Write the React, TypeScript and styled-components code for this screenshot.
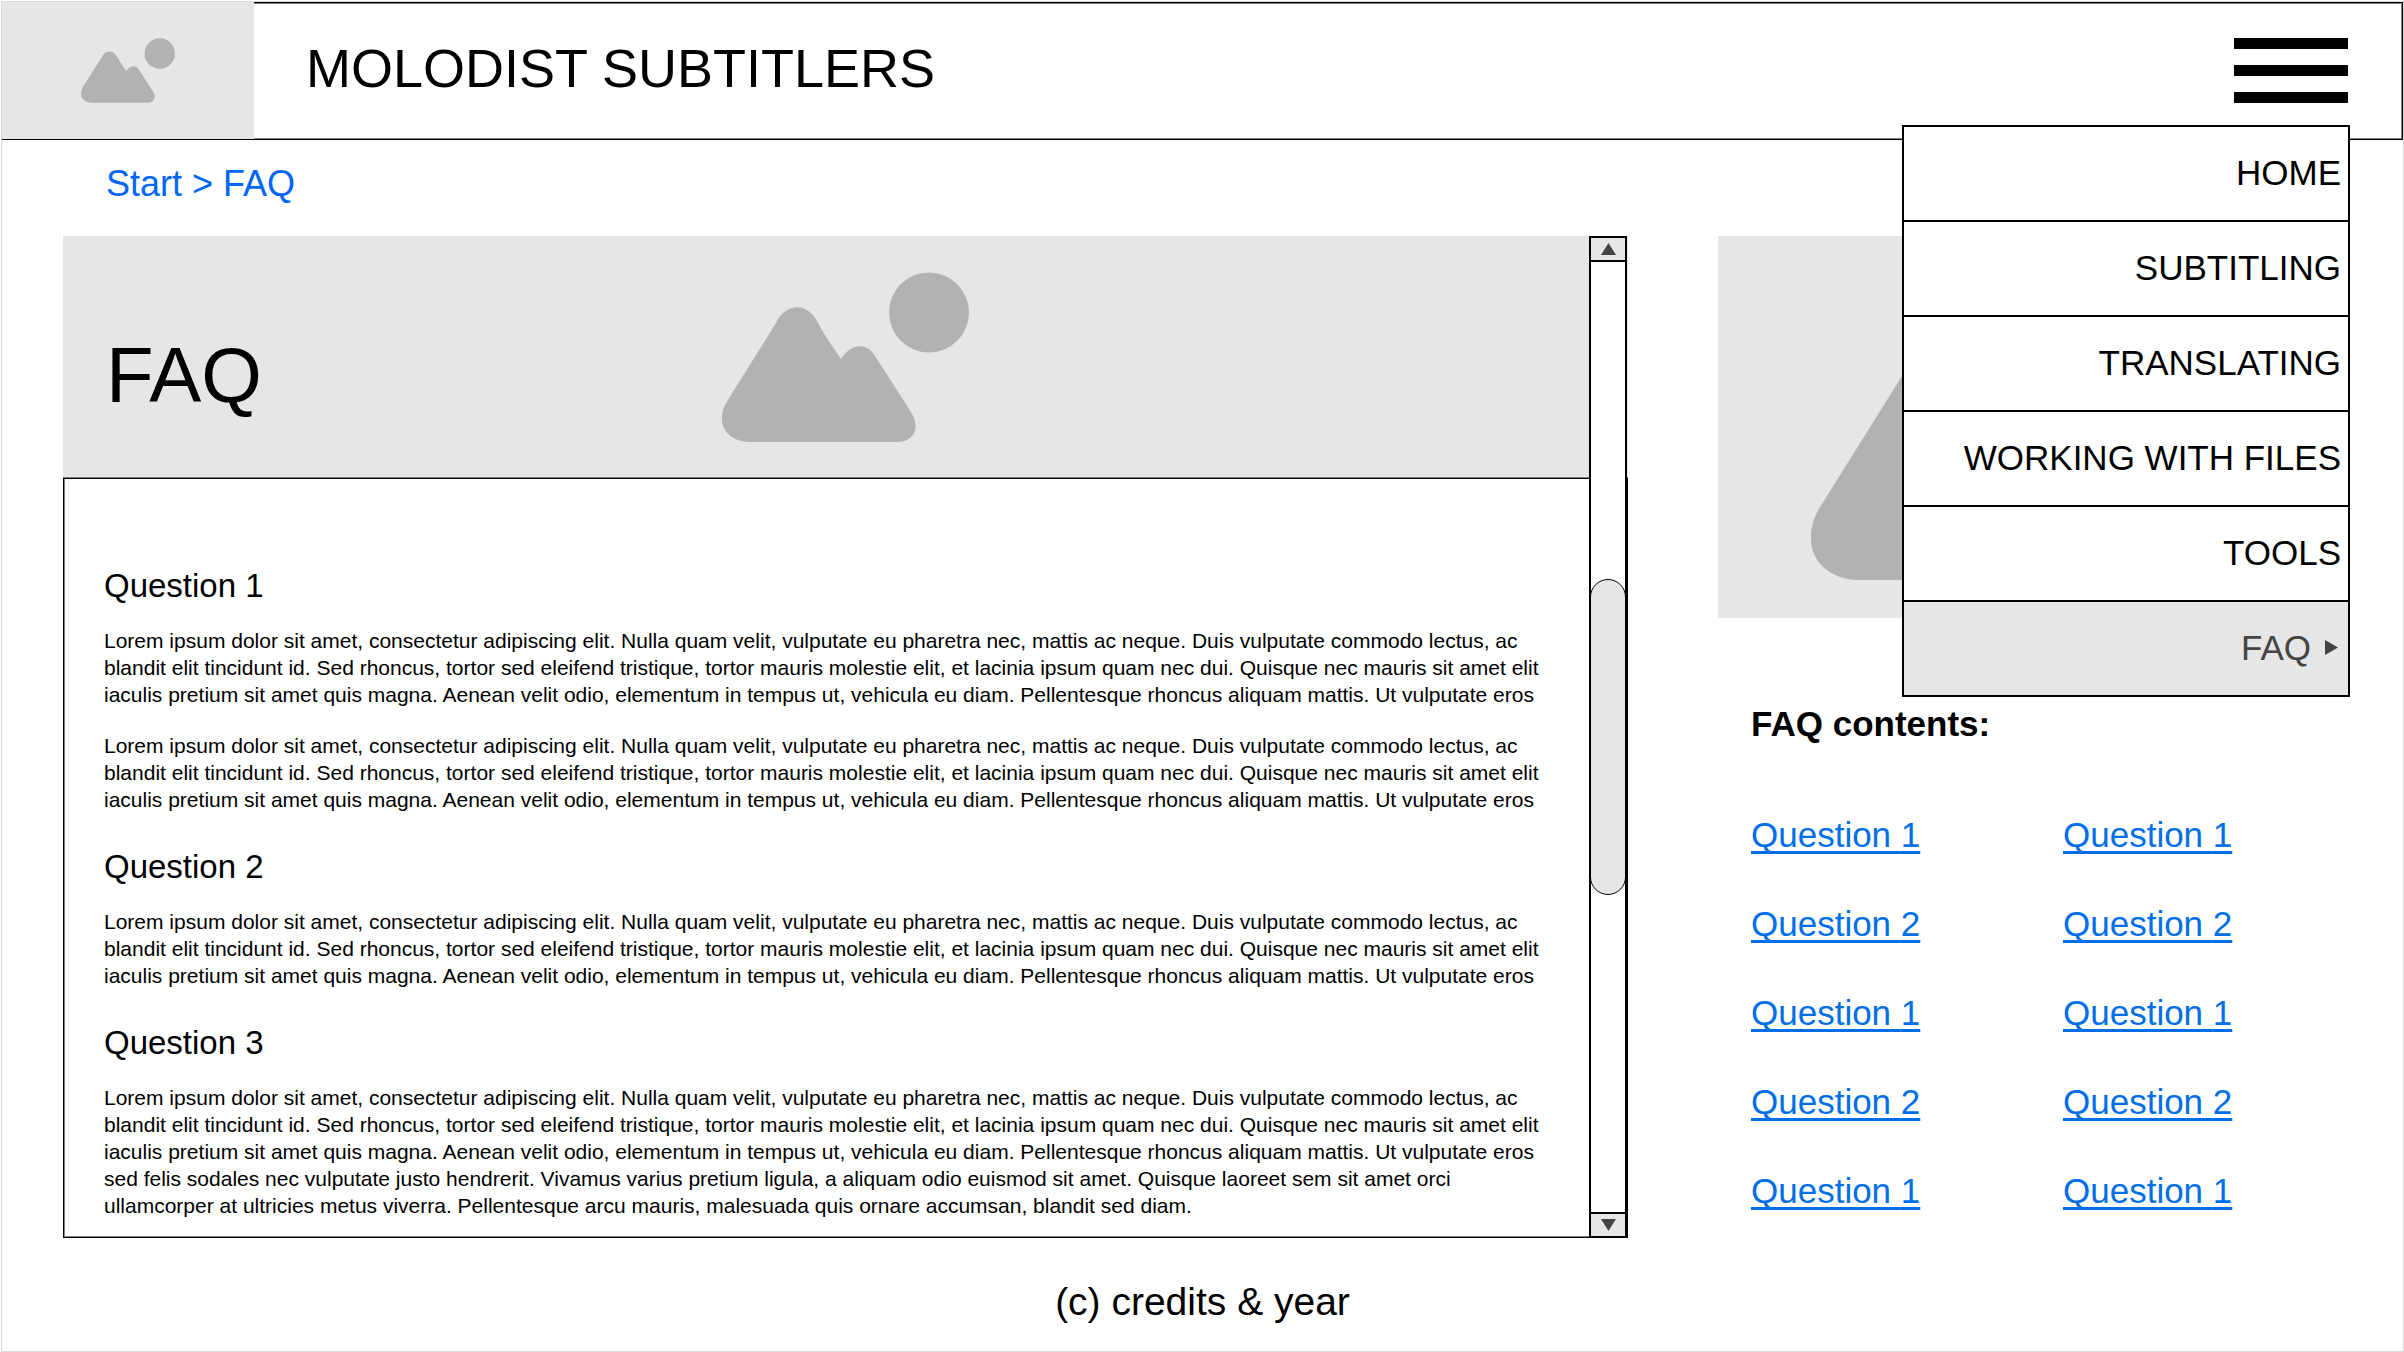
import React from 'react';
import styled, { createGlobalStyle } from 'styled-components';

const line = '#000000';
const soft = '#808080';
const fill = '#e6e6e6';
const shape = '#b2b2b2';
const dim = '#444444';

const GlobalStyle = createGlobalStyle`
  *, *::before, *::after { box-sizing: border-box; }
  body {
    margin: 0;
    padding: 1px 0 0 1px;
    background: #ffffff;
    color: #000000;
    font-family: "Liberation Sans", Arial, Helvetica, sans-serif;
  }
  h1, h2, h3, p, ul { margin: 0; padding: 0; font-weight: 400; }
  ul { list-style: none; }
  a { color: inherit; text-decoration: none; }
  button { margin: 0; padding: 0; border: 0; background: none; font: inherit; cursor: pointer; }
`;

const Page = styled.div`
  display: flex;
  flex-direction: column;
  min-height: calc(100vh - 1px);
  border: 1px solid #d9d9d9;
`;

const Header = styled.header`
  position: relative;
  display: flex;
  align-items: stretch;
  height: 138px;
  border: 1px solid ${line};
  border-left: 0;
  box-shadow: inset 0 1px 0 ${soft}, inset -1px -1px 0 ${soft};
`;

const Logo = styled.a`
  display: flex;
  align-items: center;
  justify-content: center;
  width: 252px;
  margin-top: -1px;
  background: ${fill};
`;

const SiteTitle = styled.h1`
  padding: 34px 0 0 52px;
  font-size: 54px;
  line-height: 62px;
`;

const MenuArea = styled.div`
  margin-left: auto;
  padding: 35px 54px 0 0;
`;

const MenuButton = styled.button`
  display: flex;
  flex-direction: column;
  gap: 16px;
  width: 114px;
`;

const Bar = styled.span`
  display: block;
  width: 100%;
  height: 11px;
  background: #000000;
`;

const Menu = styled.nav`
  position: absolute;
  z-index: 2;
  top: 122px;
  right: 52px;
  width: 448px;
  border: 2px solid ${line};
  border-bottom: 0;
  background: #ffffff;
`;

const MenuItem = styled.a<{ $current?: boolean }>`
  display: flex;
  align-items: center;
  justify-content: flex-end;
  gap: 14px;
  height: 95px;
  padding: 0 ${p => (p.$current ? 10 : 7)}px 2px 0;
  border-bottom: 2px solid ${line};
  background: ${p => (p.$current ? fill : '#ffffff')};
  color: ${p => (p.$current ? dim : '#000000')};
  font-size: 35px;
  line-height: 40px;
`;

const Breadcrumb = styled.nav`
  padding: 24px 0 0 104px;
  color: #0066f5;
  font-size: 36px;
  line-height: 40px;
`;

const Main = styled.main`
  display: grid;
  grid-template-columns: minmax(0, 1565fr) minmax(0, 631fr);
  column-gap: 90px;
  padding: 32px 54px 0 61px;
`;

const Panel = styled.section`
  display: grid;
  grid-template-columns: minmax(0, 1fr) 39px;
  grid-template-rows: auto 1fr;
`;

const Banner = styled.div`
  grid-column: 1 / 3;
  grid-row: 1;
  display: grid;
  grid-template-columns: 1fr 247px 1fr;
  align-items: center;
  height: 242px;
  background: ${fill};
`;

const BannerTitle = styled.h2`
  padding: 36px 0 0 43px;
  font-size: 78px;
  line-height: 90px;
`;

const Article = styled.div`
  grid-column: 1 / 3;
  grid-row: 2;
  padding: 88px 75px 18px 40px;
  border: 1px solid ${line};
  box-shadow: 0 -1px 0 ${soft}, inset 1px -1px 0 ${soft};
`;

const Question = styled.section`
  & + & { margin-top: 35px; }
`;

const QuestionTitle = styled.h3`
  margin-bottom: 22px;
  font-size: 33px;
  line-height: 38px;
`;

const Paragraph = styled.p`
  font-size: 21px;
  line-height: 27px;
  & + & { margin-top: 24px; }
`;

const Scrollbar = styled.div`
  grid-column: 2;
  grid-row: 1 / 3;
  z-index: 1;
  display: flex;
  flex-direction: column;
  margin-right: 1px;
  border: 2px solid ${line};
  background: #ffffff;
`;

const ScrollButton = styled.button`
  display: flex;
  align-items: center;
  justify-content: center;
  height: 22px;
  background: ${fill};
`;

const Track = styled.div`
  display: grid;
  grid-template-rows: 317fr 316fr 317fr;
  flex: 1;
  border: solid ${line};
  border-width: 2px 0;
`;

const Thumb = styled.div`
  grid-row: 2;
  margin: 0 -1px;
  border: 1px solid ${line};
  border-radius: 18px;
  background: ${fill};
`;

const SideImage = styled.div`
  display: flex;
  align-items: center;
  justify-content: center;
  height: 382px;
  background: ${fill};
`;

const Contents = styled.nav`
  padding: 86px 0 0 33px;
`;

const ContentsTitle = styled.h2`
  font-size: 35px;
  font-weight: 700;
  line-height: 40px;
`;

const LinkGrid = styled.ul`
  display: grid;
  grid-template-columns: 312px 1fr;
  row-gap: 49px;
  padding-top: 71px;
  font-size: 35px;
  line-height: 40px;
`;

const QuestionLink = styled.a`
  color: #006ee6;
  text-decoration: underline;
  text-decoration-thickness: 3px;
  text-underline-offset: 4px;
  text-decoration-skip-ink: none;
`;

const Footer = styled.footer`
  padding: 42px 0 20px;
  font-size: 39px;
  line-height: 44px;
  text-align: center;
`;

const Picture = ({ width }: { width: number }) => (
  <svg width={width} viewBox="0 0 247 170" fill={shape} aria-hidden="true">
    <circle cx="207" cy="40.500" r="40" />
    <path d="M54 51C64 30 86 30 96 51C103 64 111 75 119 87C129 71 145 70 153 84C165 103 178 122 190 142C199 158 190 170 175 170H28C5 170-7 152 4 131Z" />
  </svg>
);

const menu = ['HOME', 'SUBTITLING', 'TRANSLATING', 'WORKING WITH FILES', 'TOOLS', 'FAQ'];

const shortText =
  'Lorem ipsum dolor sit amet, consectetur adipiscing elit. Nulla quam velit, vulputate eu pharetra nec, mattis ac neque. Duis vulputate commodo lectus, ac blandit elit tincidunt id. Sed rhoncus, tortor sed eleifend tristique, tortor mauris molestie elit, et lacinia ipsum quam nec dui. Quisque nec mauris sit amet elit iaculis pretium sit amet quis magna. Aenean velit odio, elementum in tempus ut, vehicula eu diam. Pellentesque rhoncus aliquam mattis. Ut vulputate eros';

const longText =
  shortText +
  ' sed felis sodales nec vulputate justo hendrerit. Vivamus varius pretium ligula, a aliquam odio euismod sit amet. Quisque laoreet sem sit amet orci ullamcorper at ultricies metus viverra. Pellentesque arcu mauris, malesuada quis ornare accumsan, blandit sed diam.';

const questions = [
  { title: 'Question 1', text: [shortText, shortText] },
  { title: 'Question 2', text: [shortText] },
  { title: 'Question 3', text: [longText] },
];

const links = [1, 1, 2, 2, 1, 1, 2, 2, 1, 1];

export default function App() {
  return (
    <Page>
      <GlobalStyle />
      <Header>
        <Logo href="#" aria-label="Home">
          <Picture width={94} />
        </Logo>
        <SiteTitle>MOLODIST SUBTITLERS</SiteTitle>
        <MenuArea>
          <MenuButton type="button" aria-label="Menu" aria-expanded="true">
            <Bar />
            <Bar />
            <Bar />
          </MenuButton>
        </MenuArea>
        <Menu aria-label="Main">
          {menu.map(item => (
            <MenuItem key={item} href="#" $current={item === 'FAQ'}>
              {item}
              {item === 'FAQ' && (
                <svg width="13" height="15" viewBox="0 0 13 15" fill={dim} aria-hidden="true">
                  <path d="M0 0L13 7.500L0 15Z" />
                </svg>
              )}
            </MenuItem>
          ))}
        </Menu>
      </Header>
      <Breadcrumb aria-label="Breadcrumb">
        <a href="#">Start</a> &gt; <a href="#">FAQ</a>
      </Breadcrumb>
      <Main>
        <Panel>
          <Banner>
            <BannerTitle>FAQ</BannerTitle>
            <Picture width={247} />
          </Banner>
          <Article>
            {questions.map(q => (
              <Question key={q.title}>
                <QuestionTitle>{q.title}</QuestionTitle>
                {q.text.map((t, i) => (
                  <Paragraph key={i}>{t}</Paragraph>
                ))}
              </Question>
            ))}
          </Article>
          <Scrollbar>
            <ScrollButton type="button" aria-label="Scroll up">
              <svg width="15" height="12" viewBox="0 0 15 12" fill={dim} aria-hidden="true">
                <path d="M7.500 0L15 12H0Z" />
              </svg>
            </ScrollButton>
            <Track>
              <Thumb />
            </Track>
            <ScrollButton type="button" aria-label="Scroll down">
              <svg width="15" height="12" viewBox="0 0 15 12" fill={dim} aria-hidden="true">
                <path d="M0 0H15L7.500 12Z" />
              </svg>
            </ScrollButton>
          </Scrollbar>
        </Panel>
        <aside>
          <SideImage>
            <Picture width={445} />
          </SideImage>
          <Contents aria-labelledby="contents-title">
            <ContentsTitle id="contents-title">FAQ contents:</ContentsTitle>
            <LinkGrid>
              {links.map((n, i) => (
                <li key={i}>
                  <QuestionLink href="#">Question {n}</QuestionLink>
                </li>
              ))}
            </LinkGrid>
          </Contents>
        </aside>
      </Main>
      <Footer>(c) credits &amp; year</Footer>
    </Page>
  );
}
